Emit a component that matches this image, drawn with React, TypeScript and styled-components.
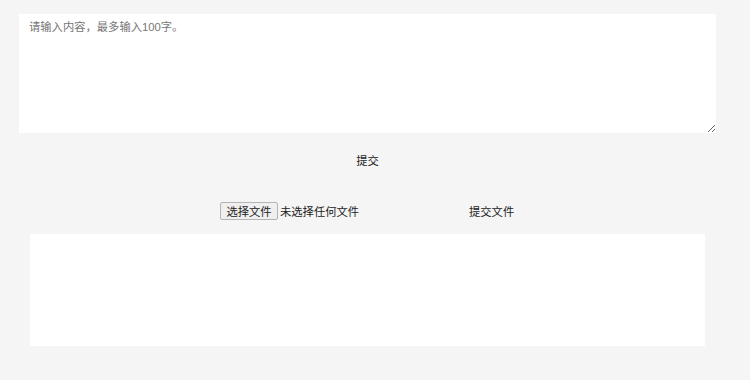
import React from 'react';
import styled, { createGlobalStyle } from 'styled-components';

const GlobalStyle = createGlobalStyle`
  html, body {
    margin: 0;
    padding: 0;
    background: #f5f5f5;
  }
  body {
    font-family: "Liberation Sans", "Noto Sans CJK SC", sans-serif;
    font-size: 11.3px;
    color: #222;
  }
`;

const StyledPage = styled.div`
  width: 750px;
  height: 380px;
  padding-top: 14px;
  box-sizing: border-box;
  display: flex;
  flex-direction: column;
`;

const StyledTextArea = styled.textarea`
  margin-left: 19px;
  width: 697px;
  height: 119px;
  box-sizing: border-box;
  border: none;
  outline: none;
  background: #fff;
  padding: 4px 10px;
  font-family: "Liberation Sans", "Noto Sans CJK SC", sans-serif;
  font-size: 11.3px;
  color: #333;
  resize: both;

  &::placeholder {
    color: #777;
  }
`;

const StyledSubmitRow = styled.div`
  margin-left: 19px;
  width: 697px;
  height: 20px;
  margin-top: 17px;
  display: flex;
  justify-content: center;
`;

const TextButton = styled.button`
  border: none;
  background: transparent;
  padding: 0;
  font-family: inherit;
  font-size: 11.3px;
  color: #222;
  cursor: pointer;
`;

const StyledFileRow = styled.div`
  margin-top: 32px;
  display: flex;
  align-items: center;
  padding-left: 220px;
  height: 18px;
`;

const StyledFilePicker = styled.div`
  width: 249px;
  display: flex;
  align-items: center;
  gap: 2px;
`;

const FileButton = styled.span`
  display: inline-flex;
  align-items: center;
  justify-content: center;
  width: 58px;
  height: 18px;
  box-sizing: border-box;
  border: 1px solid #b5b5b5;
  border-radius: 2px;
  background: #efefef;
  color: #222;
`;

const FileName = styled.span`
  color: #222;
`;

const StyledResultBox = styled.div`
  margin-left: 30px;
  margin-top: 14px;
  width: 675px;
  height: 112px;
  background: #fff;
`;

function App() {
  return (
    <>
      <GlobalStyle />
      <StyledPage>
        <StyledTextArea placeholder="请输入内容，最多输入100字。" />
        <StyledSubmitRow>
          <TextButton>提交</TextButton>
        </StyledSubmitRow>
        <StyledFileRow>
          <StyledFilePicker>
            <FileButton>选择文件</FileButton>
            <FileName>未选择任何文件</FileName>
          </StyledFilePicker>
          <TextButton>提交文件</TextButton>
        </StyledFileRow>
        <StyledResultBox />
      </StyledPage>
    </>
  );
}

export default App;
